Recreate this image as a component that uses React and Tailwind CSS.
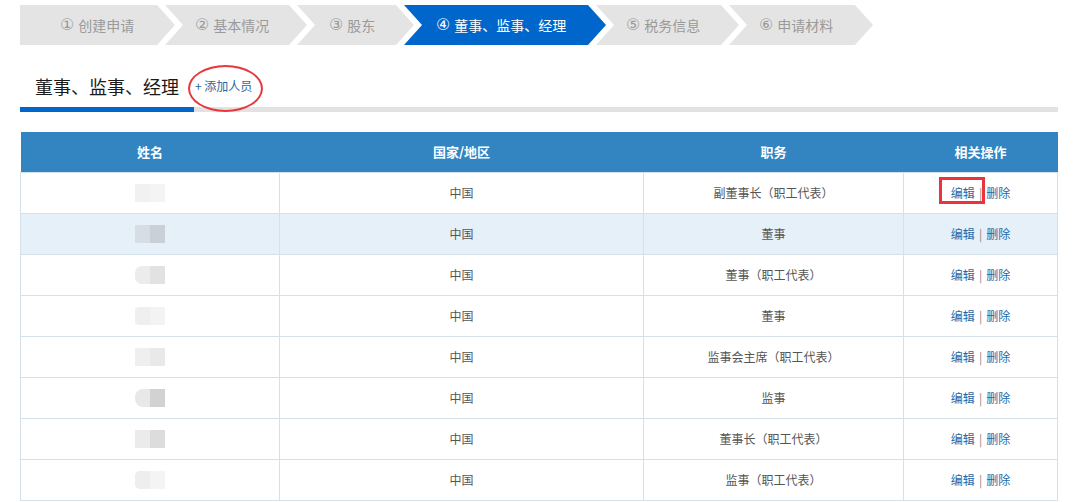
import React from "react";

const steps = [
  { num: "①", label: "创建申请", w: "w-[155px]", pl: "pl-[40px]", first: true },
  { num: "②", label: "基本情况", w: "w-[142px]", pl: "pl-[30px]" },
  { num: "③", label: "股东", w: "w-[117px]", pl: "pl-[32px]" },
  { num: "④", label: "董事、监事、经理", w: "w-[202px]", pl: "pl-[32px]", active: true },
  { num: "⑤", label: "税务信息", w: "w-[143px]", pl: "pl-[30px]" },
  { num: "⑥", label: "申请材料", w: "w-[144px]", pl: "pl-[30px]" },
];

const rows = [
  { role: "副董事长（职工代表）", blob: 0 },
  { role: "董事", blob: 1, hl: true },
  { role: "董事（职工代表）", blob: 2 },
  { role: "董事", blob: 3 },
  { role: "监事会主席（职工代表）", blob: 4 },
  { role: "监事", blob: 5 },
  { role: "董事长（职工代表）", blob: 6 },
  { role: "监事（职工代表）", blob: 7 },
];

function Blob({ v }) {
  const variants = [
    ["bg-[#f1f1f1]", "bg-[#f4f4f4]", "rounded-none"],
    ["bg-[#d6dde5]", "bg-[#c9d0d8]", "rounded-none"],
    ["bg-[#ececec]", "bg-[#e2e2e2]", "rounded-l-[7px]"],
    ["bg-[#efefef]", "bg-[#f3f3f3]", "rounded-l-[4px]"],
    ["bg-[#efefef]", "bg-[#e9e9e9]", "rounded-none"],
    ["bg-[#e8e8e8]", "bg-[#d2d2d2]", "rounded-l-[8px]"],
    ["bg-[#ebebeb]", "bg-[#dcdcdc]", "rounded-none"],
    ["bg-[#eeeeee]", "bg-[#f4f4f4]", "rounded-l-[5px]"],
  ][v];
  return (
    <div className={`mx-auto flex h-[18px] w-[30px] overflow-hidden blur-[0.6px] ${variants[2]}`}>
      <div className={`h-full w-1/2 ${variants[0]}`} />
      <div className={`h-full w-1/2 ${variants[1]}`} />
    </div>
  );
}

export default function App() {
  return (
    <div
      className="min-h-[502px] bg-white px-[20px] pt-[5px]"
      style={{ fontFamily: '"Noto Sans CJK SC", "Microsoft YaHei", sans-serif' }}
    >
      {/* steps */}
      <div className="flex h-[40px]">
        {steps.map((s, i) => (
          <div
            key={i}
            className={`flex h-full shrink-0 items-center text-[14px] ${s.w} ${s.pl} ${
              i > 0 ? "-ml-[10px]" : ""
            } ${s.active ? "bg-[#0066cc] text-white" : "bg-[#e4e4e4] text-[#9a9a9a]"} ${
              s.first
                ? "[clip-path:polygon(0_0,calc(100%_-_18px)_0,100%_50%,calc(100%_-_18px)_100%,0_100%)]"
                : "[clip-path:polygon(0_0,calc(100%_-_18px)_0,100%_50%,calc(100%_-_18px)_100%,0_100%,18px_50%)]"
            }`}
          >
            <span className="text-[16px] leading-none" style={{ fontFamily: '"DejaVu Sans", sans-serif' }}>
              {s.num}
            </span>
            <span className="ml-[4px]">{s.label}</span>
          </div>
        ))}
      </div>

      {/* title */}
      <div className="mt-[29px] flex h-[24px] items-center">
        <div className="w-[174px] pl-[15px] text-[18px] leading-[24px] text-[#1a1a1a]">
          董事、监事、经理
        </div>
        <div className="relative ml-[1px] text-[12px] leading-[24px] text-[#2a66a0]">
          + 添加人员
          <span className="absolute -left-[7px] -top-[9px] h-[47px] w-[75px] rounded-[50%] border-[2.5px] border-[#e8383d]" />
        </div>
      </div>
      <div className="mt-[9px] flex h-[5px]">
        <div className="h-full w-[174px] bg-[#0066cc]" />
        <div className="h-full flex-1 bg-[#e2e2e2]" />
      </div>

      {/* table */}
      <table className="mt-[20px] w-full table-fixed border-collapse text-[12px]">
        <colgroup>
          <col className="w-[259px]" />
          <col className="w-[364px]" />
          <col className="w-[260px]" />
          <col />
        </colgroup>
        <thead>
          <tr className="h-[40px] bg-[#3385c2] text-[13px] font-bold text-white">
            <th className="font-bold">姓名</th>
            <th className="font-bold">国家/地区</th>
            <th className="font-bold">职务</th>
            <th className="font-bold">相关操作</th>
          </tr>
        </thead>
        <tbody>
          {rows.map((r, i) => (
            <tr key={i} className={`h-[41px] ${r.hl ? "bg-[#e6f0f8]" : "bg-white"}`}>
              <td className="border border-[#d5e1ea] p-0">
                <Blob v={r.blob} />
              </td>
              <td className="border border-[#d5e1ea] text-center text-[#555]">中国</td>
              <td className="border border-[#d5e1ea] text-center text-[#555]">{r.role}</td>
              <td className="border border-[#d5e1ea] text-center text-[#1f68a6]">
                <span className="relative">
                  编辑
                  {i === 0 && (
                    <span className="absolute -left-[12px] -top-[7px] h-[27px] w-[46px] border-[3px] border-[#e8343a]" />
                  )}
                </span>
                <span className="mx-[4px] text-[#888]">|</span>
                <span>删除</span>
              </td>
            </tr>
          ))}
        </tbody>
      </table>
    </div>
  );
}
